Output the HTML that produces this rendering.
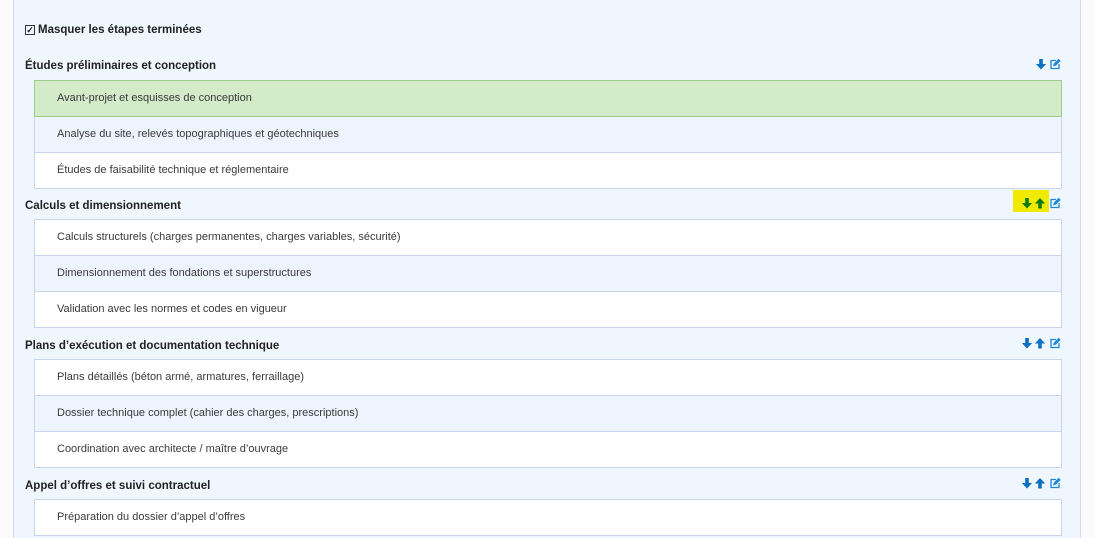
<!DOCTYPE html>
<html><head><meta charset="utf-8"><style>
body{margin:0;width:1095px;height:525px;overflow:hidden;background:#fbfbfb;font-family:"Liberation Sans",sans-serif;color:#3a3a3a}
.panel{position:absolute;left:13px;top:-2px;width:1066px;height:540px;background:#f0f6fe;border-left:1px solid #cfdcf4;border-right:1px solid #cfdcf4}
.chk{position:absolute;left:11px;top:26px;font-weight:bold;font-size:11.5px;color:#222}
.chk span{display:inline-block;width:8px;height:8px;border:1px solid #333;margin-right:3px;position:relative;top:0px;font-size:9px;line-height:8px;text-align:center}
.h{position:absolute;left:11px;font-weight:bold;font-size:11.5px;color:#222}
.list{position:absolute;left:20px;width:1026px;border:1px solid #c9d5f0;background:#fff}
.list div{height:35px;line-height:35px;padding-left:22px;font-size:11px;border-top:1px solid #c9d5f0}
.list div:first-child{border-top:none}
.list div.b{background:#eef4fd}
.list div.g{background:#d4ebc9;border:1px solid #9ccc8a;margin:-1px -1px 0 -1px;height:35px}
.list div.g + div{border-top:none;height:35px}
.hl{position:absolute;background:#f0ea00}
</style></head><body>
<div class="panel">
<div class="chk"><span>✓</span>Masquer les étapes terminées</div>

<div class="h" style="top:62px">Études préliminaires et conception</div>
<div class="list" style="top:82px"><div class="g">Avant-projet et esquisses de conception</div><div class="b">Analyse du site, relevés topographiques et géotechniques</div><div>Études de faisabilité technique et réglementaire</div></div>

<div class="h" style="top:202px">Calculs et dimensionnement</div>
<div class="list" style="top:221px"><div>Calculs structurels (charges permanentes, charges variables, sécurité)</div><div class="b">Dimensionnement des fondations et superstructures</div><div>Validation avec les normes et codes en vigueur</div></div>

<div class="h" style="top:342px">Plans d’exécution et documentation technique</div>
<div class="list" style="top:361px"><div>Plans détaillés (béton armé, armatures, ferraillage)</div><div class="b">Dossier technique complet (cahier des charges, prescriptions)</div><div>Coordination avec architecte / maître d’ouvrage</div></div>

<div class="h" style="top:482px">Appel d’offres et suivi contractuel</div>
<div class="list" style="top:501px"><div>Préparation du dossier d’appel d’offres</div></div>
</div>

<div class="hl" style="left:1013px;top:190px;width:36px;height:22px"></div>

<svg width="1095" height="525" style="position:absolute;left:0;top:0">
<defs>
<g id="dn"><path d="M-1.8 0h3.6v5h3.3l-5.1 5.5-5.1-5.5h3.3z" transform="translate(4,0)"/></g>
<g id="up"><path d="M-1.8 10.5h3.6v-5h3.3l-5.1-5.5-5.1 5.5h3.3z" transform="translate(4,0)"/></g>
<g id="ed" fill="none" stroke="#1e88d8" stroke-width="1.3"><path d="M6 1.5H1v8h8V5"/><path d="M4 6.5l.4-1.6L8.6.7l1.2 1.2L5.6 6.1z" fill="#1e88d8"/></g>
</defs>
<use href="#dn" x="1037" y="59" fill="#0b6fc2"/><use href="#ed" x="1050" y="59"/>
<use href="#dn" x="1023" y="198" fill="#107a10"/><use href="#up" x="1036" y="198" fill="#107a10"/><use href="#ed" x="1050" y="198"/>
<use href="#dn" x="1023" y="338" fill="#0b6fc2"/><use href="#up" x="1036" y="338" fill="#0b6fc2"/><use href="#ed" x="1050" y="338"/>
<use href="#dn" x="1023" y="478" fill="#0b6fc2"/><use href="#up" x="1036" y="478" fill="#0b6fc2"/><use href="#ed" x="1050" y="478"/>
</svg>
</body></html>
